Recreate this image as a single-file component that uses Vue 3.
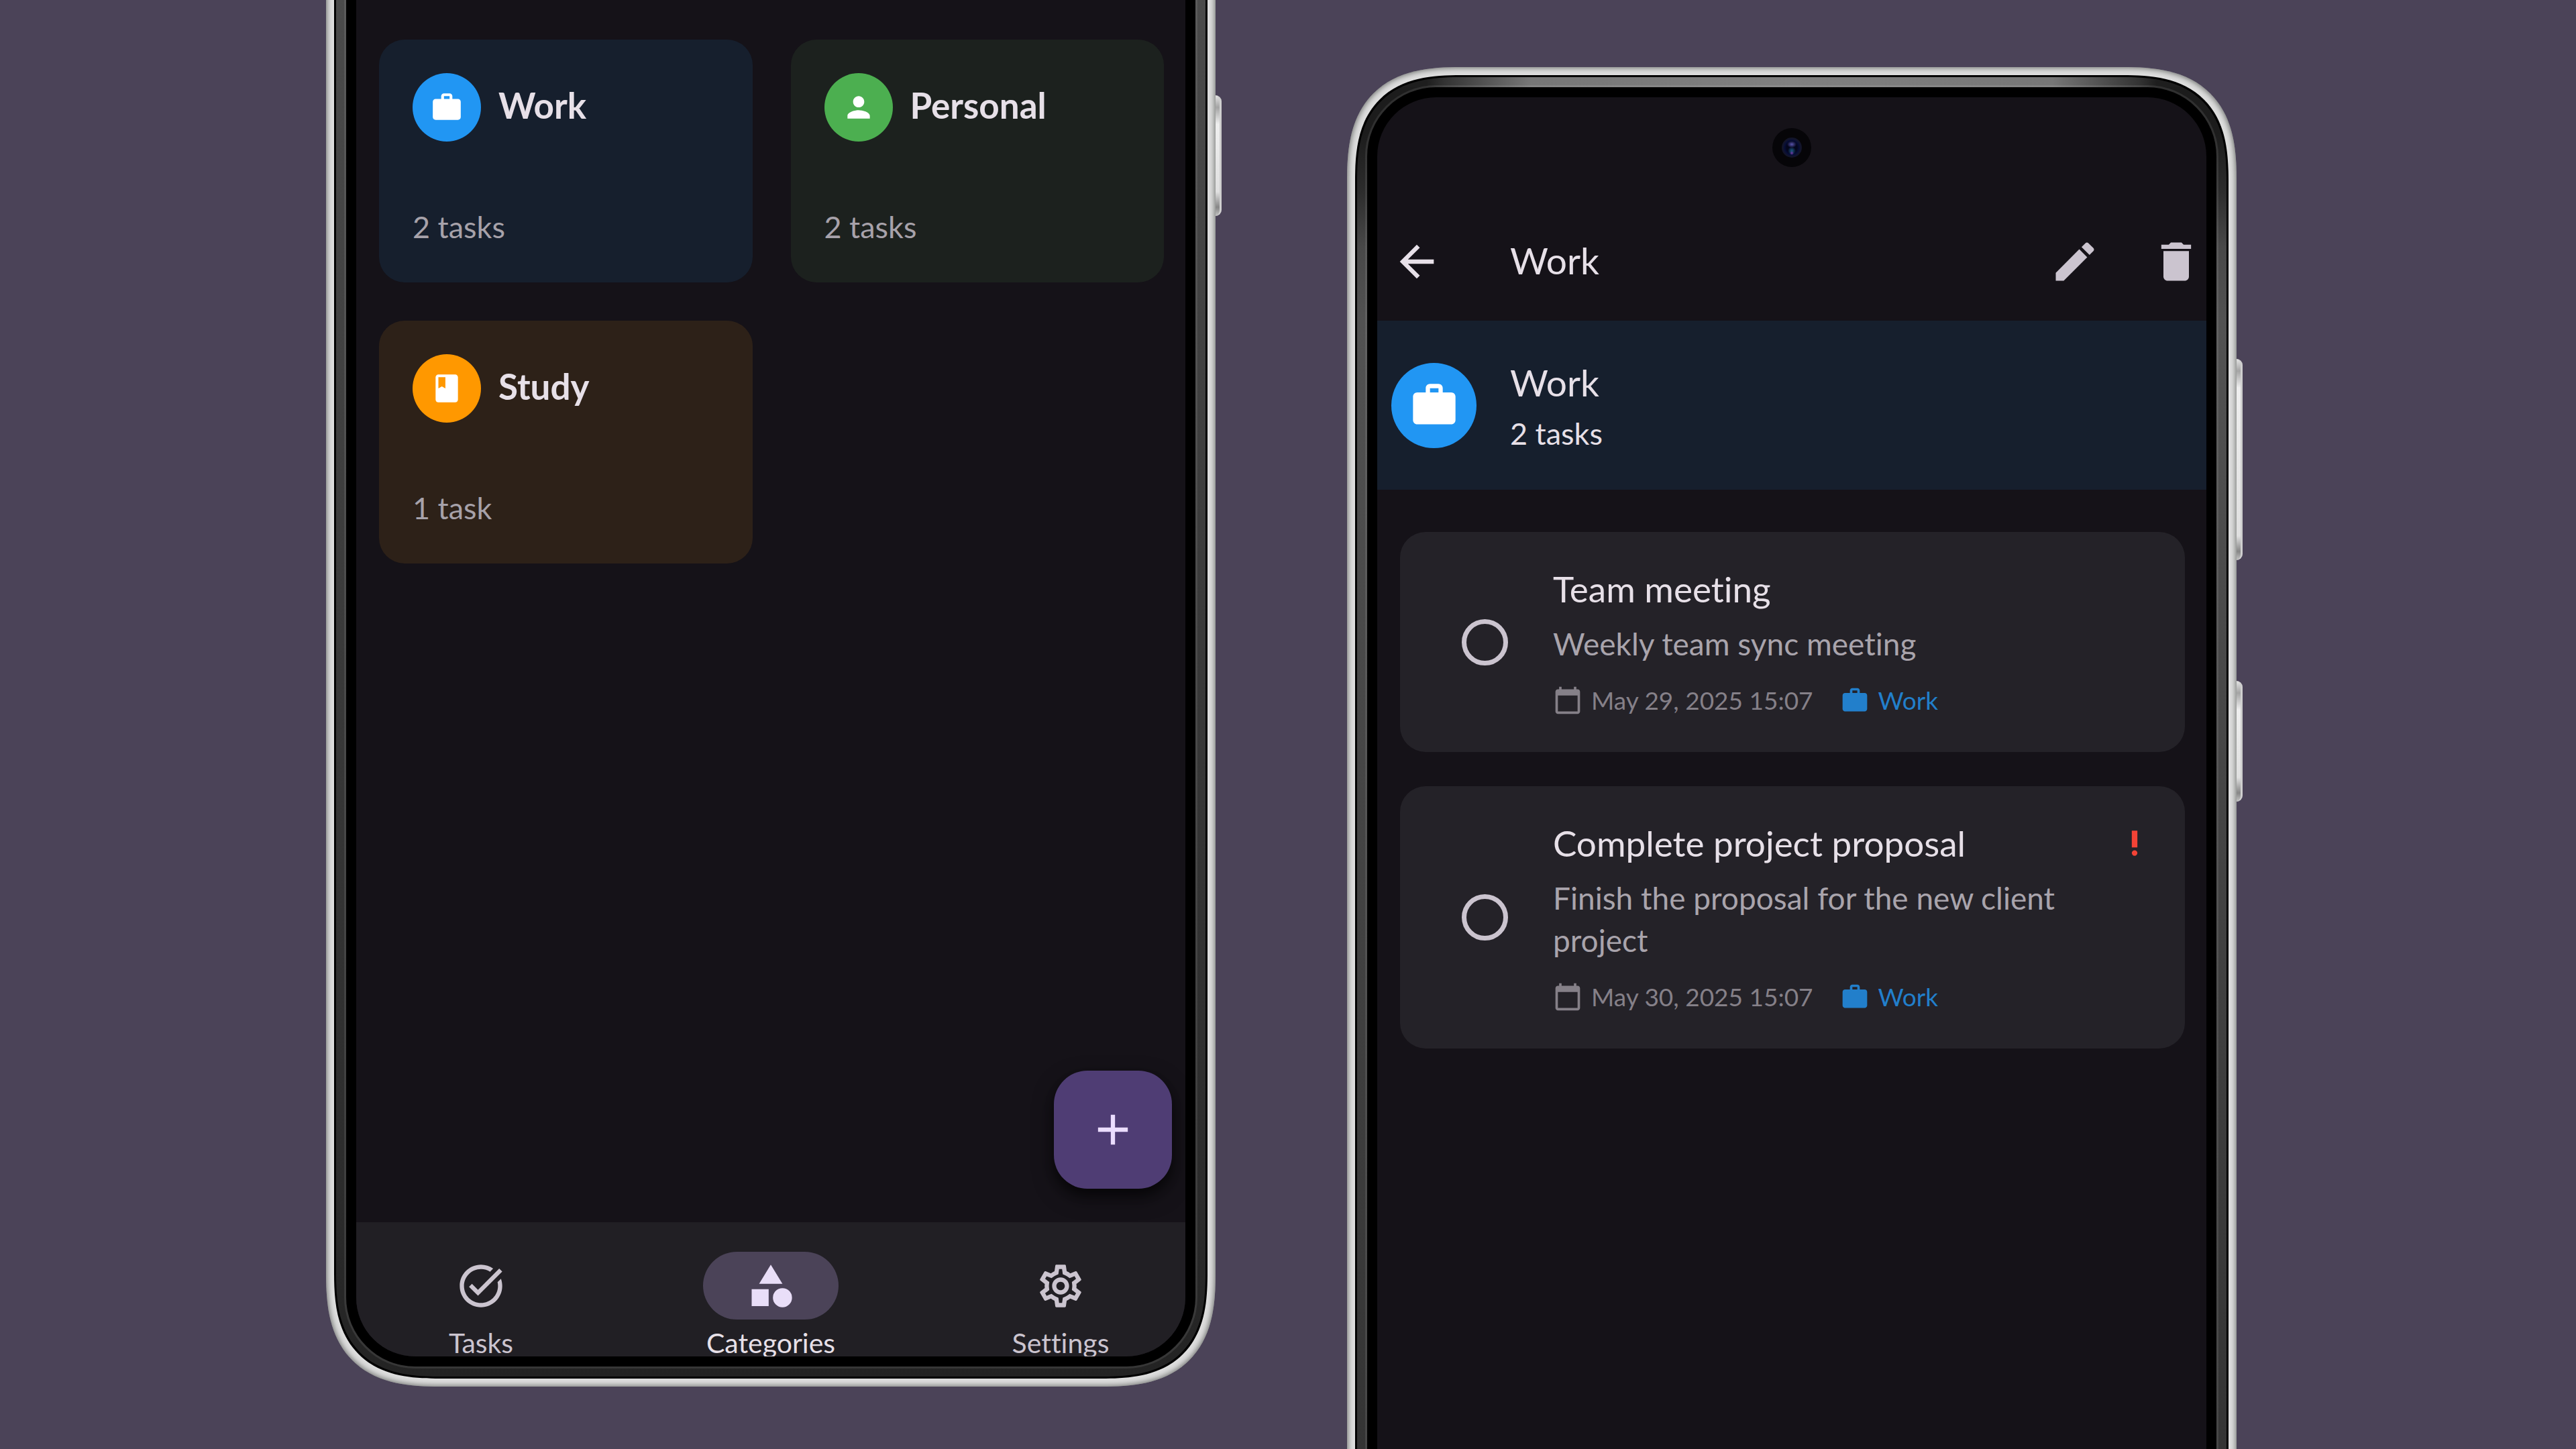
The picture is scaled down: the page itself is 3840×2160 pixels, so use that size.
<script setup>
import { ref } from 'vue'

const icons = {
  work: 'M20 6h-4V4c0-1.11-.89-2-2-2h-4c-1.11 0-2 .89-2 2v2H4c-1.11 0-1.99.89-1.99 2L2 19c0 1.11.89 2 2 2h16c1.11 0 2-.89 2-2V8c0-1.11-.89-2-2-2zm-6 0h-4V4h4v2z',
  person: 'M12 12c2.21 0 4-1.79 4-4s-1.79-4-4-4-4 1.79-4 4 1.79 4 4 4zm0 2c-2.67 0-8 1.34-8 4v2h16v-2c0-2.66-5.33-4-8-4z',
  book: 'M18 2H6c-1.1 0-2 .9-2 2v16c0 1.1.9 2 2 2h12c1.1 0 2-.9 2-2V4c0-1.1-.9-2-2-2zM6 4h5v8l-2.5-1.5L6 12V4z',
  add: 'M19 13h-6v6h-2v-6H5v-2h6V5h2v6h6v2z',
  back: 'M20 11H7.83l5.59-5.59L12 4l-8 8 8 8 1.41-1.41L7.83 13H20v-2z',
  edit: 'M3 17.25V21h3.75L17.81 9.94l-3.75-3.75L3 17.25zM20.71 7.04c.39-.39.39-1.02 0-1.41l-2.34-2.34c-.39-.39-1.02-.39-1.41 0l-1.83 1.83 3.75 3.75 1.83-1.83z',
  trash: 'M6 19c0 1.1.9 2 2 2h8c1.1 0 2-.9 2-2V7H6v12zM19 4h-3.5l-1-1h-5l-1 1H5v2h14V4z',
  calendar: 'M20 3h-1V1h-2v2H7V1H5v2H4c-1.1 0-2 .9-2 2v16c0 1.1.9 2 2 2h16c1.1 0 2-.9 2-2V5c0-1.1-.9-2-2-2zm0 18H4V8h16v13z',
  priority: 'M10 3h4v12h-4zM12 17a2 2 0 1 0 0 4 2 2 0 0 0 0-4z',
  check: 'M22 5.18L10.59 16.6l-4.24-4.24 1.41-1.41 2.83 2.83 10-10L22 5.18zm-2.21 5.04c.13.57.21 1.17.21 1.78 0 4.42-3.58 8-8 8s-8-3.58-8-8 3.58-8 8-8c1.58 0 3.04.46 4.28 1.25l1.44-1.44C16.1 2.67 14.13 2 12 2 6.48 2 2 6.48 2 12s4.48 10 10 10 10-4.48 10-10c0-1.19-.22-2.33-.6-3.39l-1.61 1.61z',
  category: 'M12 2l-5.5 9h11zM17.5 13a4.5 4.5 0 1 0 0 9 4.5 4.5 0 0 0 0-9zM3 13.5h8v8H3z',
  settings: 'M19.43 12.98c.04-.32.07-.64.07-.98s-.03-.66-.07-.98l2.11-1.65c.19-.15.24-.42.12-.64l-2-3.46c-.09-.16-.26-.25-.44-.25-.06 0-.12.01-.17.03l-2.49 1c-.52-.4-1.08-.73-1.69-.98l-.38-2.65C14.46 2.18 14.25 2 14 2h-4c-.25 0-.46.18-.49.42l-.38 2.65c-.61.25-1.17.59-1.69.98l-2.49-1c-.06-.02-.12-.03-.18-.03-.17 0-.34.09-.43.25l-2 3.46c-.13.22-.07.49.12.64l2.11 1.65c-.04.32-.07.65-.07.98s.03.66.07.98l-2.11 1.65c-.19.15-.24.42-.12.64l2 3.46c.09.16.26.25.44.25.06 0 .12-.01.17-.03l2.49-1c.52.4 1.08.73 1.69.98l.38 2.65c.03.24.24.42.49.42h4c.25 0 .46-.18.49-.42l.38-2.65c.61-.25 1.17-.59 1.69-.98l2.49 1c.06.02.12.03.18.03.17 0 .34-.09.43-.25l2-3.46c.12-.22.07-.49-.12-.64l-2.11-1.65zm-1.98-1.71c.04.31.05.52.05.73 0 .21-.02.43-.05.73l-.14 1.13.89.7 1.08.84-.7 1.21-1.27-.51-1.04-.42-.9.68c-.43.32-.84.56-1.25.73l-1.06.43-.16 1.13-.2 1.35h-1.4l-.19-1.35-.16-1.13-1.06-.43c-.43-.18-.83-.41-1.23-.71l-.91-.7-1.06.43-1.27.51-.7-1.21 1.08-.84.89-.7-.14-1.13c-.03-.31-.05-.54-.05-.74s.02-.43.05-.73l.14-1.13-.89-.7-1.08-.84.7-1.21 1.27.51 1.04.42.9-.68c.43-.32.84-.56 1.25-.73l1.06-.43.16-1.13.2-1.35h1.39l.19 1.35.16 1.13 1.06.43c.43.18.83.41 1.23.71l.91.7 1.06-.43 1.27-.51.7 1.21-1.07.85-.89.7.14 1.13zM12 8c-2.21 0-4 1.79-4 4s1.79 4 4 4 4-1.79 4-4-1.79-4-4-4zm0 6c-1.1 0-2-.9-2-2s.9-2 2-2 2 .9 2 2-.9 2-2 2z'
}

const categories = [
  { name: 'Work', count: '2 tasks', icon: 'work', tone: 'blue' },
  { name: 'Personal', count: '2 tasks', icon: 'person', tone: 'green' },
  { name: 'Study', count: '1 task', icon: 'book', tone: 'orange' }
]

const tabs = [
  { name: 'Tasks', icon: 'check' },
  { name: 'Categories', icon: 'category' },
  { name: 'Settings', icon: 'settings' }
]
const activeTab = ref('Categories')

const tasks = ref([
  { id: 1, title: 'Team meeting', note: 'Weekly team sync meeting', due: 'May 29, 2025 15:07', urgent: false, done: false },
  { id: 2, title: 'Complete project proposal', note: 'Finish the proposal for the new client project', due: 'May 30, 2025 15:07', urgent: true, done: false }
])
</script>

<template>
  <main class="stage">
    <section class="phone phone-categories" aria-label="Categories">
      <span class="side-key side-key-long"></span>
      <span class="side-key side-key-short"></span>
      <div class="shell">
        <div class="rim">
          <div class="glass">
            <div class="screen">
              <div class="category-area">
                <div class="category-grid">
                  <article v-for="c in categories" :key="c.name" class="category" :class="c.tone">
                    <header class="category-head">
                      <span class="avatar">
                        <svg class="icon-sm" viewBox="0 0 24 24"><path :d="icons[c.icon]" /></svg>
                      </span>
                      <h2>{{ c.name }}</h2>
                    </header>
                    <p class="count">{{ c.count }}</p>
                  </article>
                </div>
                <button class="fab" type="button" aria-label="Add category">
                  <svg class="icon" viewBox="0 0 24 24"><path :d="icons.add" /></svg>
                </button>
              </div>
              <nav class="tabs">
                <button
                  v-for="t in tabs"
                  :key="t.name"
                  type="button"
                  class="tab"
                  :class="{ active: t.name === activeTab }"
                  @click="activeTab = t.name"
                >
                  <span class="pill">
                    <svg class="icon" viewBox="0 0 24 24"><path :d="icons[t.icon]" /></svg>
                  </span>
                  <span class="tab-label">{{ t.name }}</span>
                </button>
              </nav>
            </div>
          </div>
        </div>
      </div>
    </section>

    <section class="phone phone-detail" aria-label="Work category">
      <span class="side-key side-key-long"></span>
      <span class="side-key side-key-short"></span>
      <div class="shell">
        <div class="rim">
          <div class="glass">
            <div class="screen">
              <span class="camera"><span class="lens"></span></span>
              <header class="app-bar">
                <button type="button" class="back" aria-label="Back">
                  <svg class="icon" viewBox="0 0 24 24"><path :d="icons.back" /></svg>
                </button>
                <h1>Work</h1>
                <button type="button" aria-label="Edit">
                  <svg class="icon" viewBox="0 0 24 24"><path :d="icons.edit" /></svg>
                </button>
                <button type="button" aria-label="Delete">
                  <svg class="icon" viewBox="0 0 24 24"><path :d="icons.trash" /></svg>
                </button>
              </header>
              <div class="banner">
                <span class="avatar avatar-lg">
                  <svg class="icon" viewBox="0 0 24 24"><path :d="icons.work" /></svg>
                </span>
                <div class="banner-text">
                  <h2>Work</h2>
                  <p>2 tasks</p>
                </div>
              </div>
              <ul class="task-list">
                <li v-for="t in tasks" :key="t.id" class="task">
                  <input :id="'task-' + t.id" v-model="t.done" type="checkbox" class="tick" />
                  <div class="task-body">
                    <div class="task-head">
                      <label :for="'task-' + t.id">{{ t.title }}</label>
                      <svg v-if="t.urgent" class="icon-sm urgent" viewBox="0 0 24 24"><path :d="icons.priority" /></svg>
                    </div>
                    <p class="note">{{ t.note }}</p>
                    <div class="meta">
                      <span class="meta-item">
                        <svg class="icon-xs" viewBox="0 0 24 24"><path :d="icons.calendar" /></svg>
                        <time>{{ t.due }}</time>
                      </span>
                      <span class="meta-item meta-work">
                        <svg class="icon-xs" viewBox="0 0 24 24"><path :d="icons.work" /></svg>
                        <span>Work</span>
                      </span>
                    </div>
                  </div>
                </li>
              </ul>
            </div>
          </div>
        </div>
      </div>
    </section>
  </main>
</template>

<style>
body {
  background: #4b4358;
}
</style>

<style scoped>
.stage,
.stage * {
  box-sizing: border-box;
}

.stage {
  display: grid;
  grid-template-rows: 100%;
  grid-template-columns: 486fr 1326fr 196fr 1326fr 506fr;
  height: 100vh;
  overflow: hidden;
  background: #4b4358;
  color: #e7e0e8;
  font-family: Lato, "Open Sans", sans-serif;
  font-variant-ligatures: none;
}

h1, h2, p, ul {
  margin: 0;
  padding: 0;
  list-style: none;
}

button {
  display: flex;
  align-items: center;
  justify-content: center;
  padding: 0;
  border: 0;
  background: none;
  color: #cbc4cf;
  font: inherit;
}

svg {
  display: block;
  flex: none;
  fill: currentColor;
}

.icon { width: 76px; height: 76px; }
.icon-sm { width: 50px; height: 50px; }
.icon-xs { width: 44px; height: 44px; }

/* Phone body */
.phone {
  position: relative;
  aspect-ratio: 1326 / 2840;
}

.phone-categories {
  grid-column: 2;
  align-self: end;
  margin-bottom: 93px;
}

.phone-detail {
  grid-column: 4;
  align-self: start;
  margin-top: 100px;
}

.shell,
.rim,
.glass,
.screen {
  display: flex;
  flex-direction: column;
  height: 100%;
}

.shell {
  padding: 12px;
  border-radius: 132px;
  background: #dedede;
  box-shadow: inset 0 0 8px 1px rgba(40, 44, 40, 0.65);
}

.rim {
  padding: 12px;
  border: 3px solid #000;
  border-radius: 120px;
  background:
    linear-gradient(90deg, #1e1e1e 8%, #333 10%, #777 20%, #808080 50%, #777 80%, #333 90%, #1e1e1e 92%) top / 100% 15px no-repeat,
    linear-gradient(#1c1c1c 3%, #2c2c2c 6%, #484848 9%, #525252 13%, #444 40%, #2c2c2c 90%, #232323);
}

@supports (corner-shape: squircle) {
  .shell {
    border-radius: 170px;
    corner-shape: superellipse(1.4);
  }

  .rim {
    border-radius: 158px;
    corner-shape: superellipse(1.4);
  }
}

.glass {
  padding: 15px;
  border: 3px solid rgba(255, 255, 255, 0.09);
  border-radius: 106px;
  background: #000 padding-box;
}

.screen {
  position: relative;
  overflow: hidden;
  border-radius: 88px;
  background: #151218;
}

.side-key {
  position: absolute;
  left: 100%;
  width: 9px;
  border-right: 3px solid #cfcfcf;
  border-radius: 0 9px 9px 0;
  background: linear-gradient(#e4e4e4, #a4a4a4 18px, #efefef 43px, #e0e0e0 calc(100% - 36px), #868686 calc(100% - 13px), #c4c4c4);
}

.side-key-long { top: 435px; height: 300px; }
.side-key-short { top: 915px; height: 180px; }

.avatar {
  display: flex;
  flex: none;
  align-items: center;
  justify-content: center;
  width: 102px;
  height: 102px;
  border-radius: 50%;
  background: #2196f3;
  color: #fff;
}

.avatar-lg { width: 127px; height: 127px; }

/* Categories screen */
.category-area {
  position: relative;
  flex: 1;
  padding: 787px 32px 0 34px;
}

.category-grid {
  display: grid;
  grid-template-columns: 1fr 1fr;
  gap: 57px;
}

.category {
  display: flex;
  flex-direction: column;
  justify-content: space-between;
  min-height: 362px;
  padding: 50px;
  border-radius: 38px;
}

.blue { background: #161f2d; }
.green { background: #1c211e; }
.orange { background: #2d2118; }
.green .avatar { background: #4caf50; }
.orange .avatar { background: #ff9800; }

.category-head {
  display: flex;
  align-items: center;
  gap: 26px;
}

.category-head h2 {
  padding-bottom: 6px;
  font-size: 53px;
  line-height: 66px;
}

.count {
  color: #a7a2aa;
  font-size: 45px;
  line-height: 66px;
}

.fab {
  position: absolute;
  right: 20px;
  bottom: 50px;
  width: 176px;
  height: 176px;
  border-radius: 50px;
  background: #4f3d74;
  box-shadow: 0 12px 30px rgba(0, 0, 0, 0.5), 0 10px 14px rgba(0, 0, 0, 0.3);
  color: #ebddff;
}

.tabs {
  display: flex;
  flex: none;
  height: 200px;
  margin: 0 -30px;
  padding-top: 44px;
  background: #211f24;
}

.tab {
  flex: 1;
  flex-direction: column;
  justify-content: flex-start;
  gap: 10px;
  font-size: 41px;
  line-height: 49px;
}

.pill {
  display: flex;
  flex: none;
  align-items: center;
  justify-content: center;
  width: 202px;
  height: 101px;
  border-radius: 51px;
}

.active { color: #e7e0e8; }

.active .pill {
  background: #4b4358;
  color: #e9def8;
}

/* Category detail screen */
.phone-detail .screen { padding-top: 157px; }

.camera {
  position: absolute;
  top: 46px;
  left: 50%;
  display: flex;
  align-items: center;
  justify-content: center;
  width: 58px;
  height: 58px;
  margin-left: -29px;
  border-radius: 50%;
  background: #060508;
}

.lens {
  width: 30px;
  height: 30px;
  border: 3px solid #12142a;
  border-radius: 50%;
  background:
    radial-gradient(ellipse 7px 5px at 50% 30%, #5a55b0, transparent),
    radial-gradient(circle 3px at 50% 84%, #7a3bb0, transparent),
    radial-gradient(ellipse 6px 6px at 50% 70%, #1d5c86, transparent),
    radial-gradient(circle, #04061c 45%, #0d1a66);
}

.app-bar {
  display: flex;
  flex: none;
  align-items: center;
  gap: 75px;
  height: 176px;
  padding: 0 7px 0 21px;
}

.app-bar .back {
  margin-right: 26px;
  color: #e7e0e8;
}

.app-bar h1 {
  flex: 1;
  padding-bottom: 4px;
  font-size: 55px;
  font-weight: 400;
  line-height: 80px;
}

.banner {
  display: flex;
  flex: none;
  align-items: center;
  gap: 50px;
  height: 252px;
  padding: 0 21px;
  background: #161f2d;
}

.banner-text { padding-top: 4px; }

.banner-text h2 {
  font-size: 55px;
  font-weight: 400;
  line-height: 80px;
}

.banner-text p {
  font-size: 45px;
  line-height: 72px;
}

.task-list {
  display: flex;
  flex-direction: column;
  gap: 51px;
  padding: 63px 32px 63px 34px;
}

.task {
  display: flex;
  align-items: center;
  gap: 67px;
  padding: 47px 50px 55px 92px;
  border-radius: 38px;
  background: #242228;
}

.tick {
  flex: none;
  width: 69px;
  height: 69px;
  margin: 8px 0 0;
  border: 7px solid #cbc4cf;
  border-radius: 50%;
  appearance: none;
}

.tick:checked { background: #cbc4cf; }

.task-body {
  flex: 1;
  min-width: 0;
}

.task-head {
  display: flex;
  align-items: center;
  justify-content: space-between;
  font-size: 53px;
  line-height: 75px;
}

.urgent { color: #f44336; }

.note {
  margin: 13px 0 31px;
  padding-right: 60px;
  color: #a9a4ac;
  font-size: 46px;
  line-height: 63px;
}

.meta {
  display: flex;
  gap: 40px;
  color: #858088;
  font-size: 37px;
  line-height: 44px;
}

.meta-item {
  display: flex;
  align-items: center;
  gap: 13px;
}

.meta-work { color: #227fcb; }
</style>
